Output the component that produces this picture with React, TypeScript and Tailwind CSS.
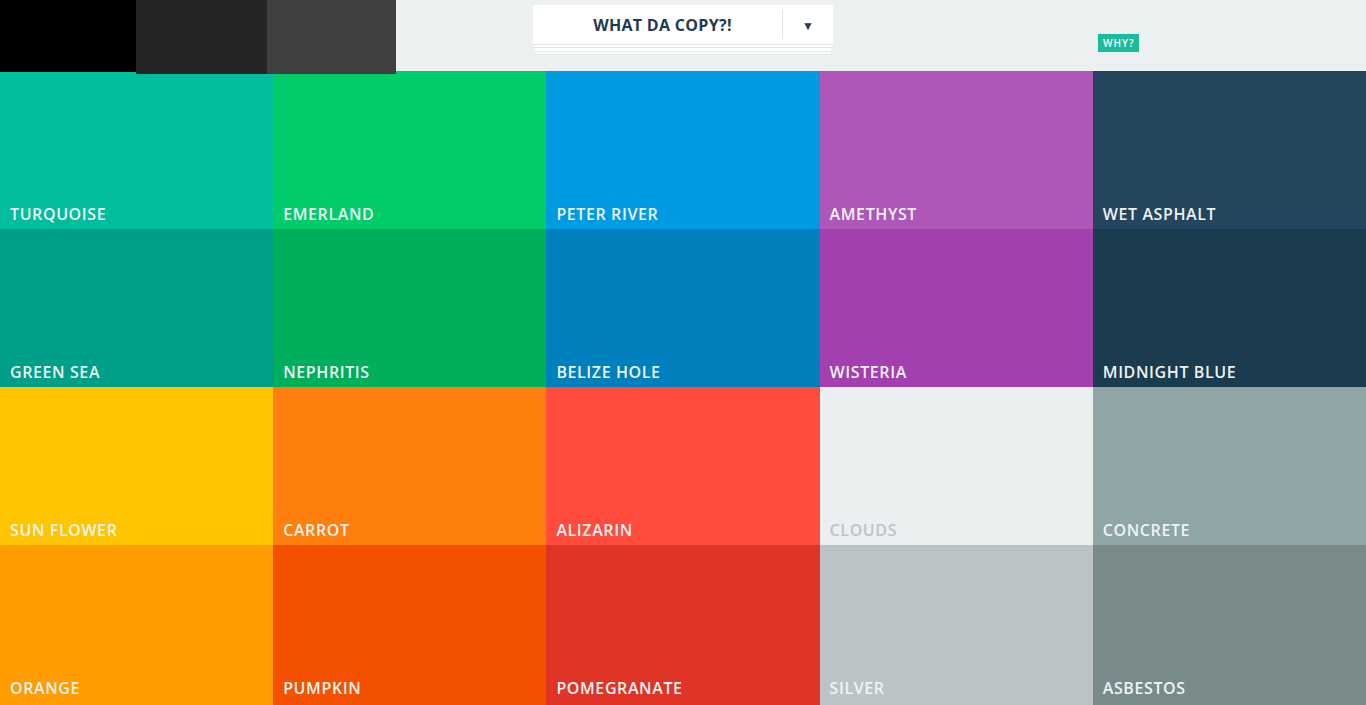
import React from 'react';

const colors = [
  { name: 'TURQUOISE', bg: 'bg-[#00bd9c]', text: 'text-[#eef3f3]' },
  { name: 'EMERLAND', bg: 'bg-[#00cc6a]', text: 'text-[#eef3f3]' },
  { name: 'PETER RIVER', bg: 'bg-[#009be0]', text: 'text-[#eef3f3]' },
  { name: 'AMETHYST', bg: 'bg-[#ae57b9]', text: 'text-[#eef3f3]' },
  { name: 'WET ASPHALT', bg: 'bg-[#23465e]', text: 'text-[#eef3f3]' },
  { name: 'GREEN SEA', bg: 'bg-[#009f88]', text: 'text-[#eef3f3]' },
  { name: 'NEPHRITIS', bg: 'bg-[#00af5b]', text: 'text-[#eef3f3]' },
  { name: 'BELIZE HOLE', bg: 'bg-[#0081bd]', text: 'text-[#eef3f3]' },
  { name: 'WISTERIA', bg: 'bg-[#a33faf]', text: 'text-[#eef3f3]' },
  { name: 'MIDNIGHT BLUE', bg: 'bg-[#1b3b4f]', text: 'text-[#eef3f3]' },
  { name: 'SUN FLOWER', bg: 'bg-[#ffc500]', text: 'text-[#eef3f3]' },
  { name: 'CARROT', bg: 'bg-[#ff7f0e]', text: 'text-[#eef3f3]' },
  { name: 'ALIZARIN', bg: 'bg-[#ff4c3d]', text: 'text-[#eef3f3]' },
  { name: 'CLOUDS', bg: 'bg-[#ebeff0]', text: 'text-[#bdc3c7]' },
  { name: 'CONCRETE', bg: 'bg-[#90a5a6]', text: 'text-[#eef3f3]' },
  { name: 'ORANGE', bg: 'bg-[#ff9d00]', text: 'text-[#eef3f3]' },
  { name: 'PUMPKIN', bg: 'bg-[#f45200]', text: 'text-[#eef3f3]' },
  { name: 'POMEGRANATE', bg: 'bg-[#e03526]', text: 'text-[#eef3f3]' },
  { name: 'SILVER', bg: 'bg-[#bcc3c6]', text: 'text-[#eef3f3]' },
  { name: 'ASBESTOS', bg: 'bg-[#798a8b]', text: 'text-[#eef3f3]' },
];

export default function App() {
  return (
    <div className="w-[1366px] h-[705px] bg-[#ecf0f1] overflow-hidden" style={{ fontFamily: '"Open Sans", "Liberation Sans", sans-serif' }}>
      {/* Top bar */}
      <div className="relative z-10 h-[71px] grid grid-cols-[1fr_300px_1fr]">
        <div className="flex items-start">
          <div className="w-[136px] h-[72px] bg-black" />
          <div className="w-[131px] h-[74px] bg-[#252525]" />
          <div className="w-[129px] h-[74px] bg-[#404040]" />
        </div>

        {/* Copy dropdown */}
        <div className="pt-[5px]">
          <div className="relative z-30 h-[40px] bg-white flex items-center border-b border-[#e3e7e8]">
            <div className="flex-1 text-center text-[16px] font-bold text-[#1f3b50] tracking-[0.3px] pl-[10px]">
              WHAT DA COPY?!
            </div>
            <div className="w-px h-[29px] bg-[#dde1e2]" />
            <div className="w-[50px] flex justify-center text-[12px] text-[#2c3e50] pt-[2px]">▼</div>
          </div>
          <div className="mx-[1px] h-[3px] bg-white border-b border-[#e3e7e8]" />
          <div className="mx-[2px] h-[4px] bg-white border-b border-[#e3e7e8]" />
          <div className="mx-[3px] h-[3px] bg-white border-b border-[#e6eaeb]" />
        </div>

        <div className="pl-[265px] pt-[29px]">
          <span className="inline-block h-[18px] leading-[18px] px-[5px] bg-[#1abc9c] text-white text-[10px] font-semibold tracking-[1px]">
            WHY?
          </span>
        </div>
      </div>

      {/* Palette grid */}
      <div className="grid grid-cols-5">
        {colors.map((c, i) => (
          <div
            key={c.name}
            className={`${c.bg} flex items-end px-[10px] ${i >= 15 ? 'h-[160px] pb-[5px]' : 'h-[158px] pb-[3px]'}`}
          >
            <span className={`${c.text} text-[16px] font-semibold tracking-[0.6px]`}>{c.name}</span>
          </div>
        ))}
      </div>
    </div>
  );
}
